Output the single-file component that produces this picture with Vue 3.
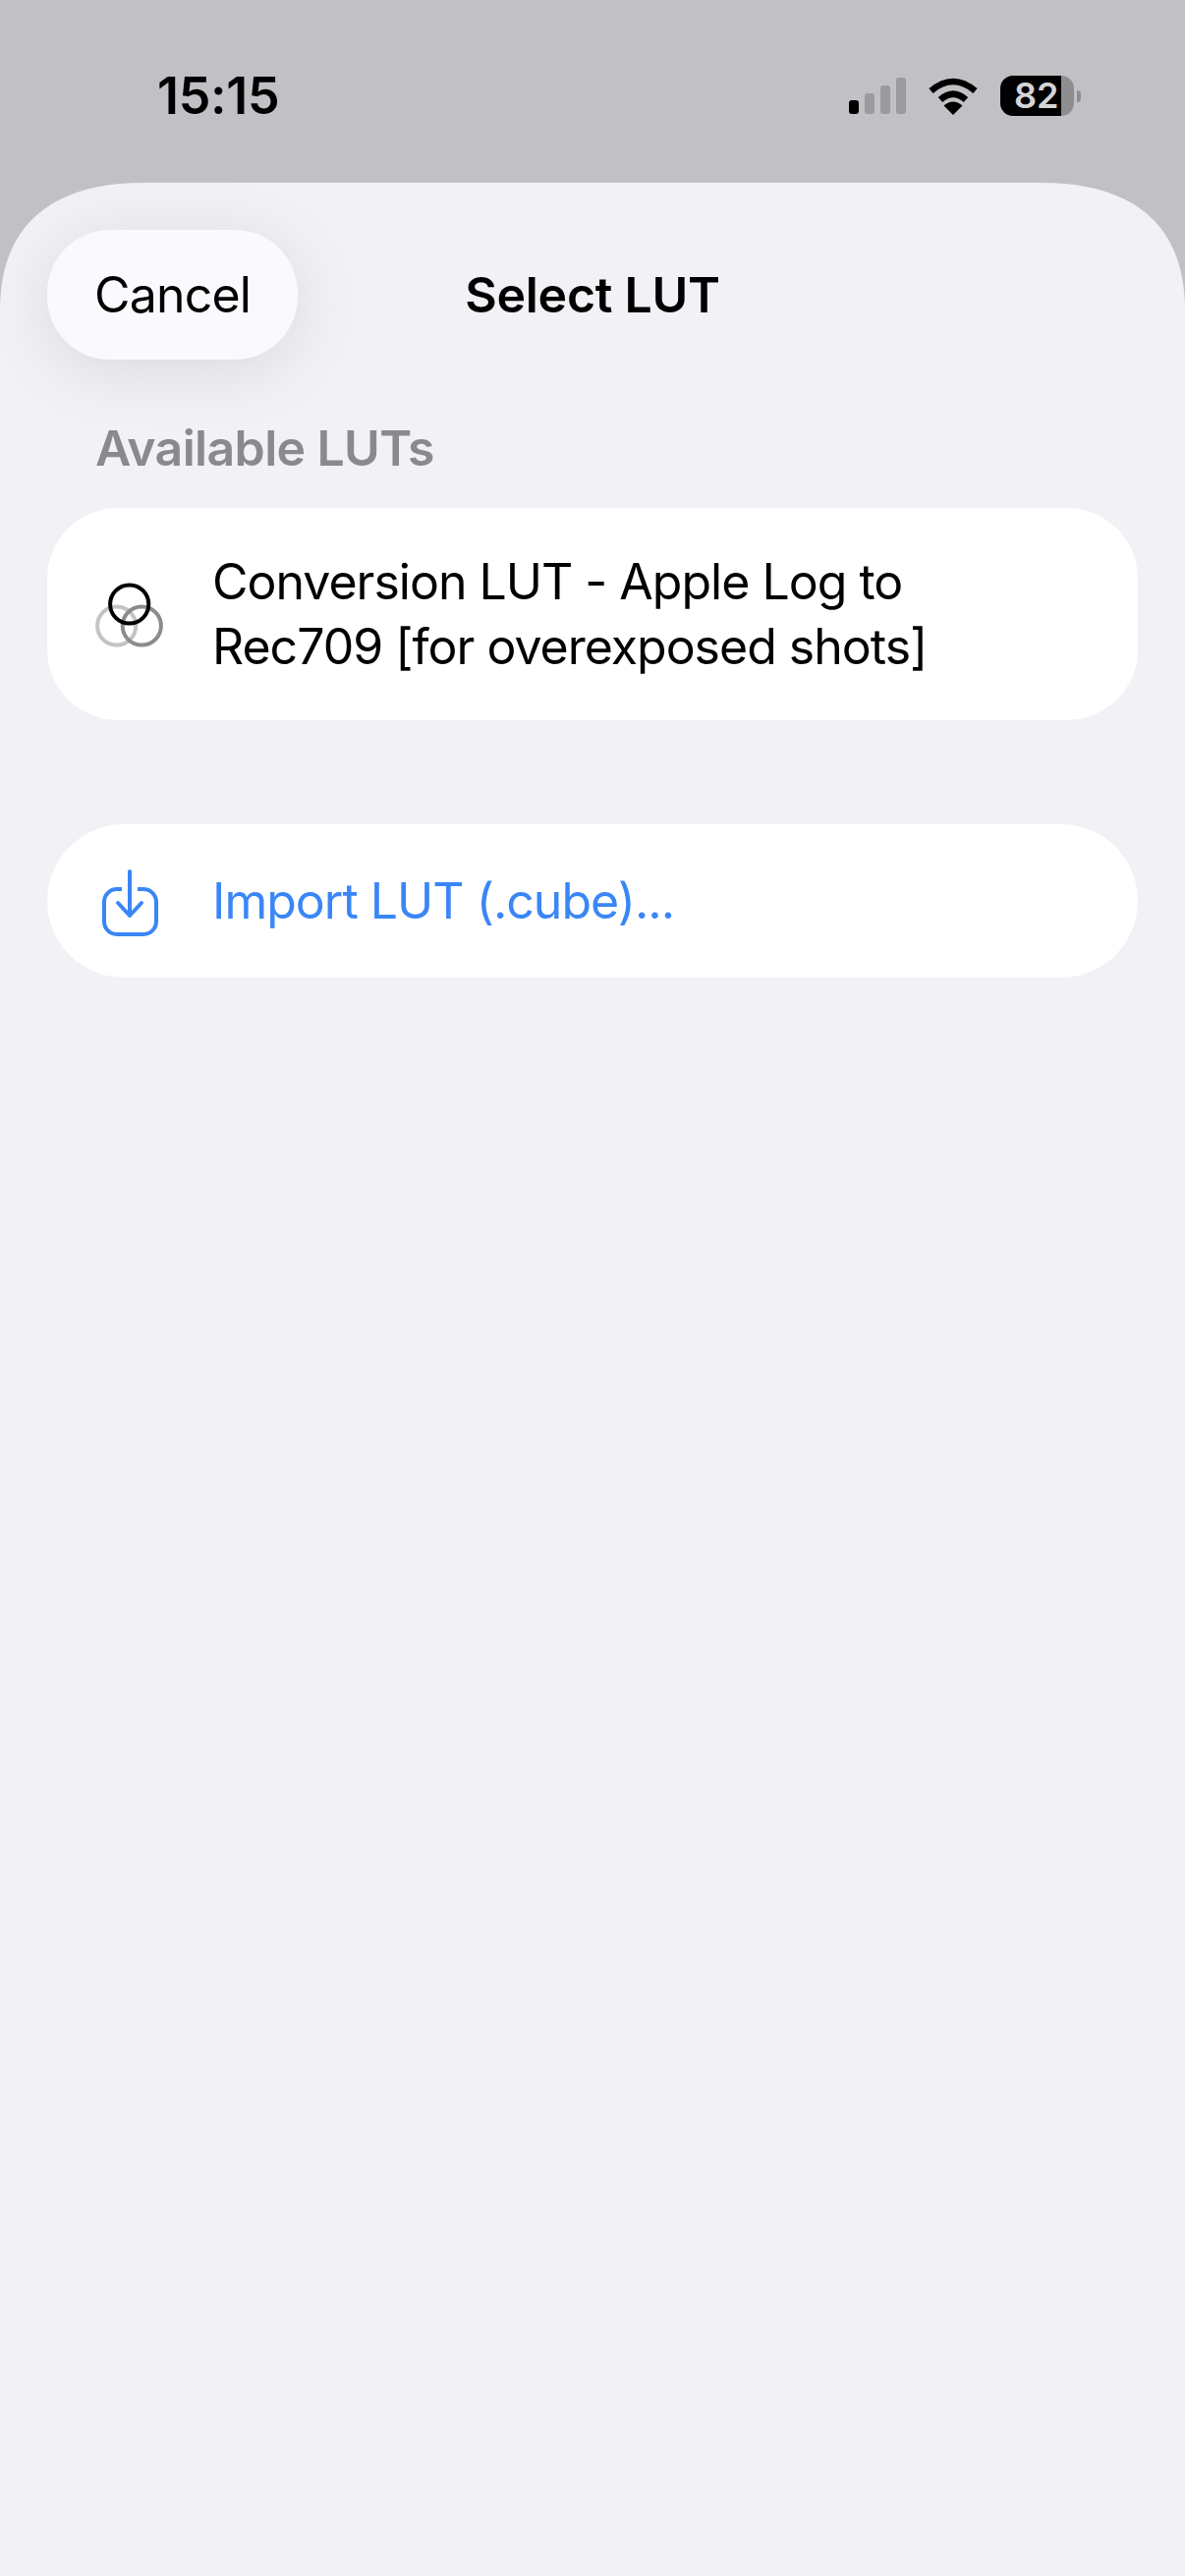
<script setup>
const bars = [
  { id: 1, height: 14, on: true },
  { id: 2, height: 21, on: false },
  { id: 3, height: 29, on: false },
  { id: 4, height: 37, on: false },
]
</script>

<template>
  <div class="screen">
    <header class="status">
      <span class="time">15:15</span>
      <div class="indicators">
        <div class="signal">
          <i v-for="b in bars" :key="b.id" class="bar" :class="{ on: b.on }" :style="{ height: b.height + 'px' }"></i>
        </div>
        <svg class="wifi" width="52" height="38" viewBox="0 0 52 38">
          <path d="M3.5 13.500Q26 -5.500 48.500 13.500" fill="none" stroke="#000" stroke-width="6.500" />
          <path d="M13 22.500Q26 11 39 22.500" fill="none" stroke="#000" stroke-width="6.500" />
          <path d="M26 38L16.500 28.500Q26 20.500 35.500 28.500Z" fill="#000" />
        </svg>
        <div class="battery">
          <div class="cell"><span>82</span></div>
          <i class="nub"></i>
        </div>
      </div>
    </header>

    <main class="sheet">
      <div class="nav">
        <button class="cancel">Cancel</button>
        <h1 class="title">Select LUT</h1>
        <span></span>
      </div>

      <h2 class="label">Available LUTs</h2>

      <div class="card lut">
        <svg class="icon" width="72" height="72" viewBox="0 0 72 72">
          <circle cx="22.700" cy="48" r="19.600" fill="none" stroke="#c4c4c4" stroke-width="4" />
          <circle cx="48.300" cy="48" r="19.600" fill="none" stroke="#8c8c8c" stroke-width="4" />
          <circle cx="35.700" cy="26" r="19.600" fill="none" stroke="#000" stroke-width="4" />
        </svg>
        <span class="lut-name">Conversion LUT - Apple Log to Rec709 [for overexposed shots]</span>
      </div>

      <div class="card import">
        <svg class="icon" width="72" height="72" viewBox="0 0 72 72">
          <path d="M28 24H23A13 13 0 0 0 10 37V57A13 13 0 0 0 23 70H50A13 13 0 0 0 63 57V37A13 13 0 0 0 50 24H44" fill="none" stroke="#3a86f6" stroke-width="4" />
          <path d="M36 6V51M24 38L36 51L48 38" fill="none" stroke="#3a86f6" stroke-width="4" stroke-linecap="round" stroke-linejoin="round" />
        </svg>
        <span class="import-text">Import LUT (.cube)...</span>
      </div>
    </main>
  </div>
</template>

<style>
html, body { margin: 0; background: #c1c0c5; }
</style>

<style scoped>
.screen {
  width: 1206px;
  height: 2622px;
  display: flex;
  flex-direction: column;
  overflow: hidden;
  background: #c1c0c5;
  font-family: Inter, "Liberation Sans", sans-serif;
  color: #000;
}
.status {
  height: 186px;
  flex: none;
  box-sizing: border-box;
  padding: 70px 106px 0 160px;
  display: flex;
  justify-content: space-between;
  align-items: flex-start;
}
.time {
  font-size: 52px;
  font-weight: 600;
  line-height: 56px;
  letter-spacing: -0.3px;
}
.indicators {
  display: flex;
  align-items: flex-start;
  margin-top: 7px;
}
.signal {
  display: flex;
  align-items: flex-end;
  gap: 6px;
  height: 37px;
  margin-top: 2px;
}
.bar {
  display: block;
  width: 10px;
  border-radius: 3px;
  background: #9b9b9e;
}
.bar.on { background: #000; }
.wifi { margin: 2px 0 0 22px; }
.battery {
  display: flex;
  align-items: center;
  margin-left: 22px;
}
.cell {
  width: 75px;
  height: 41px;
  box-sizing: border-box;
  border-radius: 13px;
  background: linear-gradient(to right, #000 62px, #8e8e90 62px);
  display: flex;
  align-items: center;
  padding-left: 14px;
}
.cell span {
  font-size: 36px;
  font-weight: 600;
  color: #d4d3d7;
  line-height: 41px;
}
.nub {
  display: block;
  width: 4px;
  height: 12px;
  margin-left: 3px;
  border-radius: 0 6px 6px 0;
  background: #8e8e90;
}
.sheet {
  flex: 1;
  box-sizing: border-box;
  background: #f1f1f6;
  clip-path: path("M0 130C0 40 56 0 146 0H1060C1150 0 1206 40 1206 130V2436H0Z");
  padding: 48px 48px 0;
  display: flex;
  flex-direction: column;
}
.nav {
  display: grid;
  grid-template-columns: 1fr auto 1fr;
  align-items: center;
}
.cancel {
  justify-self: start;
  width: 255px;
  height: 132px;
  border: 0;
  border-radius: 64px;
  padding: 0;
  background: #faf9fe;
  box-shadow: 0 10px 70px rgba(0, 0, 0, 0.1);
  font: inherit;
  font-size: 50px;
  color: #000;
  letter-spacing: -0.8px;
}
.title {
  margin: 0;
  font-size: 50px;
  font-weight: 600;
  line-height: 60px;
  letter-spacing: -0.25px;
}
.label {
  margin: 63px 0 34px 49px;
  font-size: 50px;
  font-weight: 600;
  line-height: 54px;
  color: #8a8a8e;
  letter-spacing: -0.65px;
}
.card {
  display: flex;
  align-items: center;
  background: #fff;
  box-sizing: border-box;
  padding-left: 48px;
}
.icon {
  flex: none;
  overflow: visible;
  margin-right: 48px;
}
.lut {
  height: 216px;
  border-radius: 72px;
}
.lut-name {
  width: 860px;
  font-size: 50px;
  line-height: 66px;
  letter-spacing: -1px;
}
.import {
  height: 156px;
  border-radius: 78px;
  margin-top: 106px;
}
.import-text {
  font-size: 50px;
  color: #3a86f6;
  letter-spacing: -1px;
}
</style>
